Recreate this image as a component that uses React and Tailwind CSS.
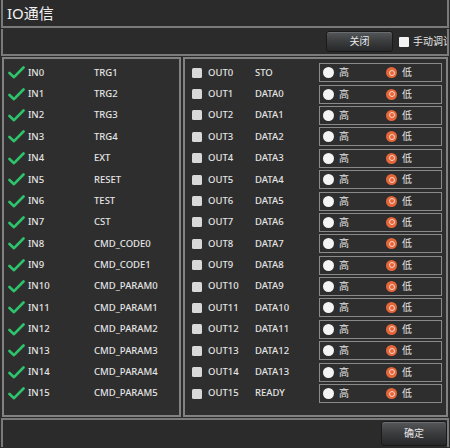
import React from "react";

const font = { fontFamily: '"Noto Sans", "Noto Sans CJK SC", sans-serif' };

const inputs = ["TRG1","TRG2","TRG3","TRG4","EXT","RESET","TEST","CST","CMD_CODE0","CMD_CODE1","CMD_PARAM0","CMD_PARAM1","CMD_PARAM2","CMD_PARAM3","CMD_PARAM4","CMD_PARAM5"];
const outputs = ["STO","DATA0","DATA1","DATA2","DATA3","DATA4","DATA5","DATA6","DATA7","DATA8","DATA9","DATA10","DATA11","DATA12","DATA13","READY"];

function Check() {
  return (
    <svg width="17" height="13" viewBox="0 0 17 13" className="shrink-0">
      <path d="M1.5 7 L6 11.2 L15.5 1.5" fill="none" stroke="#2ec46c" strokeWidth="2.6" strokeLinecap="round" strokeLinejoin="round" />
    </svg>
  );
}

function Btn({ children, className }) {
  return (
    <div className={"flex items-center justify-center rounded-[3px] border border-[#1a1a1a] bg-gradient-to-b from-[#55585a] via-[#3a3c3e] to-[#26282a] shadow-[inset_0_1px_0_#6a6d70] text-[10px] text-[#e8e8e8] " + className}>
      {children}
    </div>
  );
}

export default function App() {
  return (
    <div className="w-[450px] h-[448px] bg-[#2b2b2b] text-[#e4e4e4] overflow-hidden flex flex-col" style={font}>
      <div className="h-[28px] mx-[1px] border-x-2 border-b-2 border-[#7a7a7a] flex items-center pl-[4px] text-[15px] leading-none text-[#f2f2f2] shrink-0">
        IO通信
      </div>
      <div className="h-[27px] mt-[1px] mx-[1px] border-x-2 border-b-2 border-[#7a7a7a] flex items-center pl-[323px] overflow-hidden shrink-0">
        <Btn className="w-[67px] h-[21px] shrink-0">关闭</Btn>
        <div className="ml-[6px] w-[10px] h-[10px] bg-[#f2f2f2] rounded-[1px] shrink-0" />
        <span className="ml-[4px] text-[10px] whitespace-nowrap shrink-0">手动调试</span>
      </div>
      <div className="flex mt-[1px] h-[360px] gap-[2px] px-[2px] shrink-0">
        <div className="w-[179px] border-2 border-[#828282] bg-[#2e2e2e] pt-[3px] pl-[4px] flex flex-col">
          {inputs.map((name, i) => (
            <div key={i} className="h-[21.4px] flex items-center text-[9.5px] font-medium">
              <Check />
              <span className="ml-[3px] w-[66px]">IN{i}</span>
              <span>{name}</span>
            </div>
          ))}
        </div>
        <div className="flex-1 border-2 border-[#828282] bg-[#2e2e2e] pt-[3px] pl-[7px] flex flex-col">
          {outputs.map((name, i) => (
            <div key={i} className="h-[21.4px] flex items-center text-[9.5px] font-medium">
              <div className="w-[10px] h-[10px] rounded-[1.5px] bg-[#d9d9d9] shrink-0" />
              <span className="ml-[6px] w-[47px]">OUT{i}</span>
              <span className="w-[64px]">{name}</span>
              <div className="w-[123px] h-[19px] border border-[#8a8a8a] flex items-center pl-[3px]">
                <div className="w-[63px] flex items-center">
                  <div className="w-[11px] h-[11px] rounded-full bg-[#f4f4f4] shrink-0" />
                  <span className="ml-[5px] text-[10px] font-normal">高</span>
                </div>
                <div className="w-[11px] h-[11px] rounded-full bg-[#e4663a] flex items-center justify-center shrink-0">
                  <div className="w-[6px] h-[6px] rounded-full border-[1.5px] border-[#f8d4c4]" />
                </div>
                <span className="ml-[5px] text-[10px] font-normal">低</span>
              </div>
            </div>
          ))}
        </div>
      </div>
      <div className="h-[29px] mt-[1px] mx-[1px] border-2 border-b-0 border-[#7a7a7a] flex justify-end items-start pt-[1px] shrink-0">
        <Btn className="w-[66px] h-[25px]">确定</Btn>
      </div>
    </div>
  );
}
